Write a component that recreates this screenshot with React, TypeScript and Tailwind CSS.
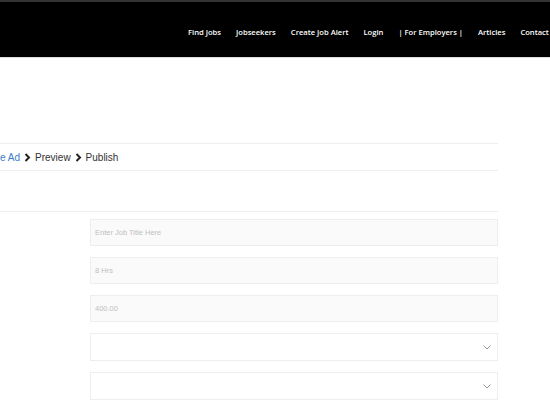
import { useState } from 'react'

const navItems = ['Find Jobs', 'Jobseekers', 'Create Job Alert', 'Login', '| For Employers |', 'Articles', 'Contact']

function Chevron() {
  return (
    <svg width="7" height="9" viewBox="0 0 7 9" className="mx-[4px]">
      <path d="M1.5 1 L5 4.5 L1.5 8" fill="none" stroke="#222" strokeWidth="2" />
    </svg>
  )
}

function SelectArrow() {
  return (
    <svg width="8" height="5" viewBox="0 0 8 5">
      <path d="M0.5 0.5 L4 4 L7.5 0.5" fill="none" stroke="#999" strokeWidth="1" />
    </svg>
  )
}

function App() {
  const [title, setTitle] = useState('')
  const [hours, setHours] = useState('')
  const [rate, setRate] = useState('')

  return (
    <div className="w-[550px] h-[400px] overflow-hidden bg-white font-['Liberation_Sans',Arial,sans-serif]">
      <header className="h-[58px] bg-black border-t-2 border-[#333] border-b border-b-[#ddd] flex items-center overflow-hidden">
        <nav className="flex items-center gap-[15px] whitespace-nowrap pl-[188px] mt-[6px] font-['Open_Sans',sans-serif] font-semibold text-[7.6px] text-white">
          {navItems.map((item) => (
            <a key={item} className="cursor-pointer">
              {item}
            </a>
          ))}
        </nav>
      </header>

      <div className="w-[498px] mt-[85px]">
        <div className="h-[28px] border-y border-[#eee] flex items-center text-[10px] text-[#333]">
          <span className="text-[#3a7bc8]">e Ad</span>
          <Chevron />
          <span>Preview</span>
          <Chevron />
          <span>Publish</span>
        </div>
        <div className="h-[41px] border-b border-[#eee]" />

        <div className="flex flex-col gap-[11px] pl-[90px] pt-[7px]">
          <input
            value={title}
            onChange={(e) => setTitle(e.target.value)}
            placeholder="Enter Job Title Here"
            className="h-[27px] w-full border border-[#eee] bg-[#fafafa] px-[4px] text-[7.5px] placeholder:text-[#c0c0c0] outline-none"
          />
          <input
            value={hours}
            onChange={(e) => setHours(e.target.value)}
            placeholder="8 Hrs"
            className="h-[27px] w-full border border-[#eee] bg-[#fafafa] px-[4px] text-[7.5px] placeholder:text-[#c0c0c0] outline-none"
          />
          <input
            value={rate}
            onChange={(e) => setRate(e.target.value)}
            placeholder="400.00"
            className="h-[27px] w-full border border-[#eee] bg-[#fafafa] px-[4px] text-[7.5px] placeholder:text-[#c0c0c0] outline-none"
          />
          <div className="h-[28px] w-full border border-[#eee] bg-white flex items-center justify-end pr-[6px]">
            <SelectArrow />
          </div>
          <div className="h-[28px] w-full border border-[#eee] bg-white flex items-center justify-end pr-[6px]">
            <SelectArrow />
          </div>
        </div>
      </div>
    </div>
  )
}

export default App
